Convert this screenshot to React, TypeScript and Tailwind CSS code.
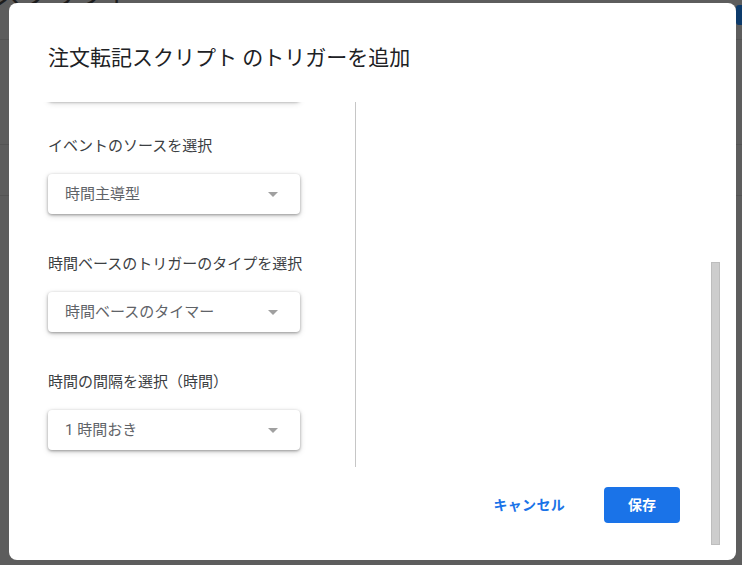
import React from "react";

const Select = ({ value }: { value: string }) => {
  return (
    <div className="flex h-[40px] w-[252px] items-center justify-between rounded-[4px] bg-white pl-[17px] pr-[22px] shadow-[0_1px_3px_rgba(0,0,0,0.35),0_2px_6px_rgba(0,0,0,0.15)]">
      <span className="text-[15px] leading-[20px] text-[#5f6368]">{value}</span>
      <span className="h-0 w-0 border-x-[5px] border-t-[5px] border-x-transparent border-t-[#a0a0a0]" />
    </div>
  );
};

const Field = ({ label, value }: { label: string; value: string }) => {
  return (
    <div className="flex flex-col">
      <p className="text-[15px] leading-[20px] text-[#3c4043]">{label}</p>
      <div className="mt-[18px]">
        <Select value={value} />
      </div>
    </div>
  );
};

const App = () => {
  return (
    <div className="relative h-[565px] w-full overflow-hidden bg-[#5d5d5d] font-['Roboto','Noto_Sans_CJK_JP',sans-serif]">
      {/* dimmed page behind the dialog */}
      <div className="flex flex-col">
        <div className="h-[40px] overflow-hidden border-b border-[#545454]">
          <p className="-mt-[20px] -ml-[6px] text-[28px] leading-[32px] text-[#1d1d1d]">
            スクリプト
          </p>
        </div>
        <div className="h-[105px] border-b border-[#545454]" />
        <div className="h-[51px] border-b border-[#545454]" />
      </div>
      <div className="absolute right-0 top-[5px] h-[20px] w-[6px] rounded-l-[3px] bg-[#0d3b6b]" />

      {/* dialog */}
      <div className="absolute left-[9px] top-[3px] h-[557px] w-[727px] rounded-[8px] bg-white">
        <h2 className="pl-[39px] pt-[42px] text-[21px] leading-[26px] text-[#202124]">
          注文転記スクリプト のトリガーを追加
        </h2>

        <div className="mt-[31px] flex h-[365px]">
          <div className="w-[346px] overflow-hidden pl-[31px]">
            <div className="flex flex-col pl-[8px]">
              <div className="-mt-[41px]">
                <Select value="" />
              </div>
              <div className="mt-[35px] flex flex-col gap-[40px]">
                <Field label="イベントのソースを選択" value="時間主導型" />
                <Field label="時間ベースのトリガーのタイプを選択" value="時間ベースのタイマー" />
                <Field label="時間の間隔を選択（時間）" value="1 時間おき" />
              </div>
            </div>
          </div>
          <div className="w-px bg-[#c6c6c6]" />
          <div className="flex-1" />
        </div>

        <div className="mt-[20px] flex items-center justify-end pr-[56px]">
          <button className="mr-[39px] text-[14px] font-bold tracking-[0.3px] text-[#1a73e8]">
            キャンセル
          </button>
          <button className="h-[36px] w-[76px] rounded-[4px] bg-[#1a73e8] text-[14px] font-bold text-white">
            保存
          </button>
        </div>

        <div className="absolute left-[702px] top-[259px] h-[283px] w-[9px] border border-[#bdbdbd] bg-[#cdcdcd]" />
      </div>
    </div>
  );
};

export default App;
